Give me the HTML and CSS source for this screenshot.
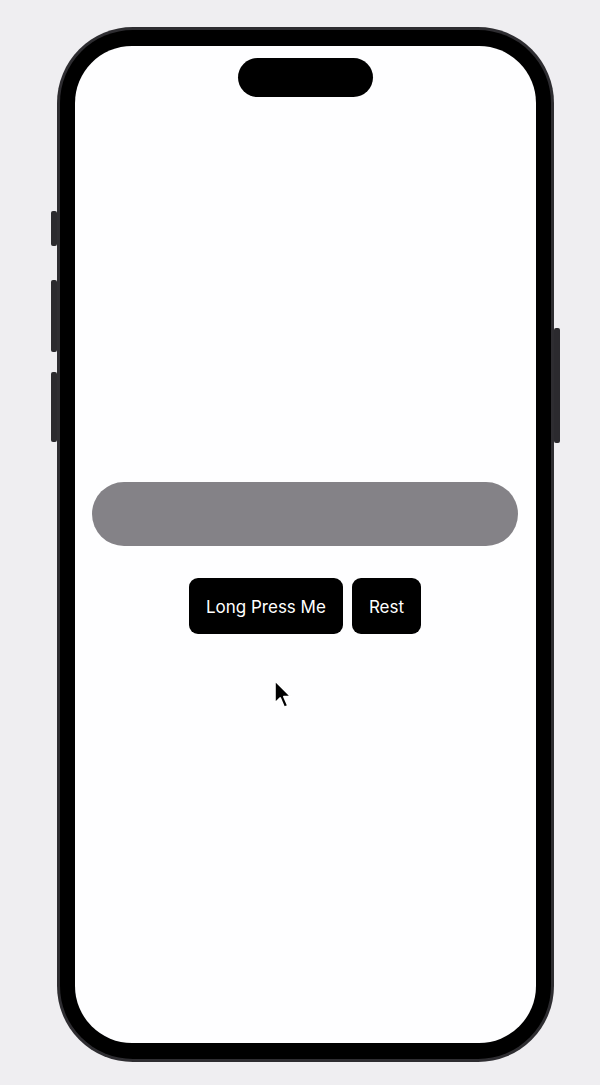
FILE: index.html
```html
<!DOCTYPE html>
<html>
<head>
<meta charset="utf-8">
<link rel="stylesheet" href="styles.css">
</head>
<body>
<div class="stage">
  <div class="phone">
    <span class="side-btn btn-silent"></span>
    <span class="side-btn btn-vol-up"></span>
    <span class="side-btn btn-vol-down"></span>
    <span class="side-btn btn-power"></span>
    <div class="bezel">
      <div class="screen">
        <div class="island"></div>
        <div class="content">
          <div class="progress"></div>
          <div class="actions">
            <button class="action">Long Press Me</button>
            <button class="action">Rest</button>
          </div>
        </div>
        <svg class="cursor" width="22" height="32" viewBox="0 0 20 30">
          <path d="M1.5 1.5 L1.5 22.5 L6.5 17.8 L10.2 26.5 L13.6 25 L9.9 16.5 L16.5 16.5 Z" fill="#000" stroke="#fff" stroke-width="1.6" stroke-linejoin="round"/>
        </svg>
      </div>
    </div>
  </div>
</div>
</body>
</html>
```
FILE: styles.css
```css
html, body {
  margin: 0;
  padding: 0;
}
body {
  background: #efeef1;
  width: 600px;
  height: 1085px;
  overflow: hidden;
  font-family: Inter, "Liberation Sans", sans-serif;
}
.stage {
  padding: 27px 0 0 57px;
}
.phone {
  position: relative;
  width: 497px;
  height: 1035px;
  box-sizing: border-box;
  padding: 3px;
  border-radius: 76px;
  background: #2e2d31;
}
.bezel {
  height: 100%;
  box-sizing: border-box;
  padding: 16px 15px;
  border-radius: 73px;
  background: #000;
}
.screen {
  position: relative;
  height: 100%;
  border-radius: 57px;
  background: #fefeff;
  overflow: hidden;
}
.island {
  position: absolute;
  left: 163px;
  top: 12px;
  width: 135px;
  height: 39px;
  border-radius: 20px;
  background: #000;
}
.content {
  display: flex;
  flex-direction: column;
  align-items: center;
  padding: 436px 18px 0 17px;
}
.progress {
  align-self: stretch;
  height: 64px;
  border-radius: 32px;
  background: #848287;
}
.actions {
  display: flex;
  gap: 9px;
  margin-top: 32px;
}
.action {
  height: 56px;
  border: 0;
  border-radius: 9px;
  background: #000;
  color: #fff;
  font-family: Inter, "Liberation Sans", sans-serif;
  font-size: 17px;
  padding: 2px 17px 0;
  cursor: pointer;
}
.cursor {
  position: absolute;
  left: 198px;
  top: 633px;
}
.side-btn {
  position: absolute;
  width: 6px;
  background: #2b2a2e;
  border-radius: 2px;
}
.btn-silent { left: -6px; top: 184px; height: 35px; }
.btn-vol-up { left: -6px; top: 253px; height: 72px; }
.btn-vol-down { left: -6px; top: 345px; height: 70px; }
.btn-power { right: -6px; top: 301px; height: 115px; }
```
